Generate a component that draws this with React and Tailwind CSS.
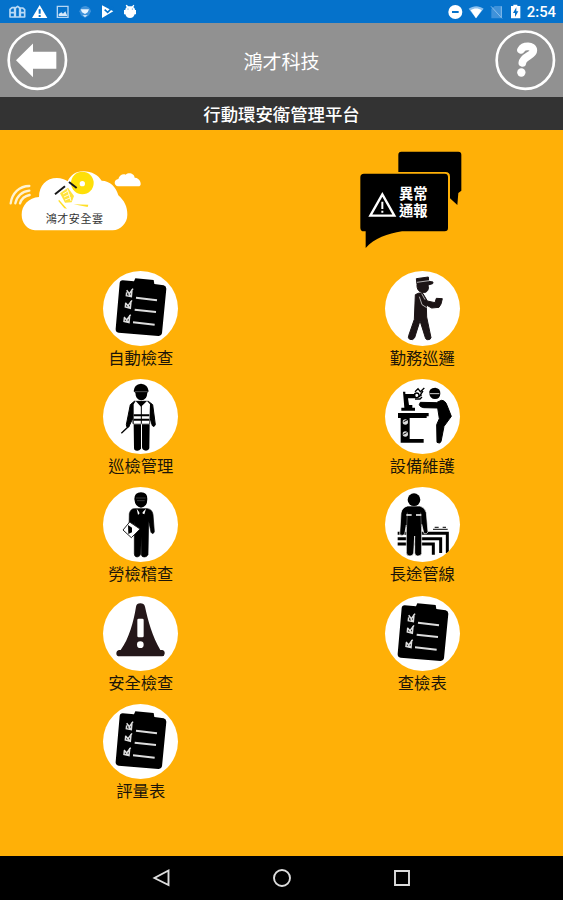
import React from "react";

const SANS = "font-['Noto_Sans_CJK_TC','Noto_Sans',sans-serif]";

function StatusBar() {
  return (
    <div className="flex h-[23px] items-center justify-between bg-[#0572cb] pr-[7px]">
      <svg width="140" height="23" viewBox="0 0 420 69" fill="#e9f3fc">
        <g fill="none" stroke="#b9d9f5" strokeWidth="5" strokeLinejoin="round">
          <path d="M30 51V28l6-5h8v28zM46 51V24l7-5 6 5v27zM61 51V24h7l6 5v22zM30 38h13M61 38h12" />
        </g>
        <path fill="#fff" fillRule="evenodd" d="M119 15l23 39H96zM116 28v13h6V28zM116 45v6h6v-6z" />
        <path fill="none" stroke="#b5d6f4" strokeWidth="4" d="M172 19h32v33h-32z" />
        <path fill="#d4e8fa" d="M176 48v-6l8-5 5 4 7-7 6 14z" />
        <path fill="#3f92da" d="M238 34c3-9 8-16 17-16s16 7 18 16l-6 12-12 8-12-8z" />
        <path fill="#eaf5ff" d="M242 28h25l-4 9-8 5-9-5zM248 46h15l-8 5z" />
        <path fill="#fff" d="M306 16l34 18-34 20z" />
        <path fill="none" stroke="#0572cb" strokeWidth="5" d="M314 29l9 8 16-16" />
        <path fill="#fff" d="M380 14l5 5h11l5-5 2 2-3 6c4 2 5 5 5 8h3v13h-4c-2 7-6 11-14 11s-12-4-14-11h-4V30h4c0-3 1-6 4-8l-3-6z" />
        <circle cx="384" cy="27" r="1.5" fill="#0572cb" />
        <circle cx="397" cy="27" r="1.5" fill="#0572cb" />
      </svg>
      <div className="flex items-center gap-[5px]">
        <svg width="75" height="23" viewBox="498 0 225 69">
          <circle cx="523" cy="36" r="21" fill="#fff" />
          <path fill="#0572cb" d="M513 33h20v6h-20z" />
          <path fill="#8ec1ee" d="M563 26c14-10 31-10 45 0l-23 29z" />
          <path fill="#fff" d="M569 31c10-7 23-7 33 0l-17 24z" />
          <path fill="#3f92da" d="M631 27l10-9h21v37h-31z" />
          <path fill="none" stroke="#87bdec" strokeWidth="3" d="M630 19l33 36M661 19v33" />
          <path fill="#fff" fillRule="evenodd" d="M697 14h12v4h9v37h-28V18h7zM706 22l-10 17h6v12l10-17h-6z" />
        </svg>
        <span className="mt-0.5 font-['Roboto',sans-serif] text-[14.8px] font-medium leading-none text-white">2:54</span>
      </div>
    </div>
  );
}

function Header() {
  return (
    <header className="flex h-[74px] items-center justify-between bg-[#919191] px-[7px]">
      <svg width="61" height="61" viewBox="21 89.5 183 183">
        <circle cx="112" cy="180" r="86" fill="none" stroke="#fff" strokeWidth="8" />
        <path fill="#fff" d="M48 180l51-50v25h70v51H99v25z" />
      </svg>
      <h1 className="text-[19px] leading-none text-white">鴻才科技</h1>
      <svg width="61" height="61" viewBox="643 89.5 183 183">
        <circle cx="734" cy="180" r="86" fill="none" stroke="#fff" strokeWidth="8" />
        <path
          fill="none"
          stroke="#fff"
          strokeWidth="23"
          strokeLinecap="round"
          strokeLinejoin="round"
          d="M721 149c8-14 37-14 37 2 0 16-30 16-33 37"
        />
        <circle cx="722" cy="217" r="12.5" fill="#fff" />
      </svg>
    </header>
  );
}

function CloudLogo() {
  return (
    <svg width="160" height="110" viewBox="0 0 480 330">
      <path
        fill="#fff"
        d="M105 271c-24-3-40-22-40-47 0-28 21-51 52-53 0-34 22-57 54-57 13 0 24 4 32 10 8-18 24-30 46-30 28 0 45 12 56 28 25 0 44 20 50 44 18 16 27 34 27 58 0 26-20 45-44 47z"
      />
      <path fill="#fff" d="M353 139c-12-3-12-20 2-22 3-12 14-17 22-13 9-9 26-4 27 9 15-1 24 21 14 26z" />
      <g fill="none" stroke="#fff3d2" strokeWidth="7" strokeLinecap="round">
        <path d="M32 190c4-30 26-52 56-52M46 190c4-21 20-36 42-38M60 190c4-13 14-22 29-25" />
      </g>
      <circle cx="247" cy="129" r="34" fill="#ffdf08" />
      <circle cx="247" cy="131" r="8" fill="#fff" />
      <path fill="none" stroke="#171717" strokeWidth="6" d="M165 163l30-24M207 126l23 18" />
      <path fill="#ffe33d" d="M180 160l24-17 18 25-7 19-20 1z" />
      <path fill="none" stroke="#fffbe0" strokeWidth="3" d="M189 162l15-9M192 171l17-8M195 180l18-7M202 148l11 35" />
      <path fill="#ffdf26" d="M177 179l24 27-8-1-18-22zM221 193l44 1-2 7z" />
      <text x="223" y="249" textAnchor="middle" fontSize="33" textLength="172" fill="#333" fontFamily="Noto Sans CJK TC, sans-serif">
        鴻才安全雲
      </text>
    </svg>
  );
}

function ReportLogo() {
  return (
    <div className="relative">
      <svg width="140" height="115" viewBox="0 0 420 345">
        <path d="M184 35h171q9 0 9 9v108l-9 7-3 36-22-20v-65q0-14-14-14H175V44q0-9 9-9z" />
        <path d="M72 101h242q10 0 10 10v153q0 10-10 10H186c-43 7-83 21-109 50v-50h-5q-11 0-11-11V112q0-11 11-11z" />
        <path fill="none" stroke="#fff" strokeWidth="7" d="M127 163l36 64H91z" />
        <path stroke="#fff" strokeWidth="6" d="M127 185v22M127 212v6" />
      </svg>
      <p className="absolute left-[59px] top-[44px] w-[29px] break-all text-[14.3px] font-bold leading-[17px] text-white">
        異常通報
      </p>
    </div>
  );
}

function Clipboard() {
  return (
    <g>
      <path d="M85 44l34 3 4-9 55 5 2 12 28 4q8 2 8 10l-13 134q-2 9-11 8l-119-10q-10-2-9-12L76 52q1-8 9-8z" />
      <path stroke="#ddd" strokeWidth="6" d="M125 96l63 8M121 132l64 7M116 170l65 7" />
      <g fill="none" stroke="#ddd" strokeWidth="4.5">
        <path d="M97 74l8 10 11-15M113 72l-2 21-15-3 1-10M103 84l8 9" />
        <path d="M93 111l8 9 12-16M110 107l-2 21-15-4 1-10M99 119l9 9" />
        <path d="M89 154l8 9 12-16M106 150l-2 21-15-4 1-10M95 162l9 9" />
      </g>
    </g>
  );
}

function Patrol() {
  return (
    <g fill="#1c1415" stroke="#1c1415" strokeWidth="3" strokeLinejoin="round">
      <path d="M123 39l36-5 1 13 13 2-1 5-14 4c4 13-2 23-14 23-12 0-20-9-19-25z" />
      <path stroke="#fff" strokeWidth="2" d="M125 50l36-5" />
      <path d="M120 87q10-8 23-3l13 22 23 5 4-13 18 1-4 16-6 10-22 2-16-9 1 36 13 62q-2 8-11 6-5-1-6-6l-16-51-16 51q-5 9-15 5-6-4-3-11l17-49z" />
      <path fill="none" stroke="#fff" strokeWidth="2" d="M132 93l8 24 14 9M139 84l10 18" />
    </g>
  );
}

function Inspector() {
  return (
    <g>
      <path d="M118 53q1-21 22-23 21 2 23 23l-4 4q-1 22-18 23-17-1-18-23z" />
      <path stroke="#777" strokeWidth="2" d="M121 54h39" />
      <path d="M120 83h42l13 10 8 60q-3 9-9 3l-8-27v21h-50v-17l-13 27q-8 2-7-7l12-60z" stroke="#000" strokeWidth="3" />
      <path fill="#fff" d="M124 82l16 17 18-17 9 10-2 58h-47V92z" />
      <path stroke="#000" strokeWidth="6" d="M118 125h47M118 138h47" />
      <path stroke="#000" strokeWidth="3" d="M141 95v55" />
      <path d="M118 152h22v73q-6 7-12 6-9 0-9-8zM143 152h23l-1 72q-2 7-10 7-12-1-12-10z" />
      <path fill="none" stroke="#000" strokeWidth="4" d="M104 157l-23 22" />
    </g>
  );
}

function Maintenance() {
  return (
    <g>
      <path d="M83 54h7v7h30v13H98l3 20h10v8h8v9H78v-9h9zM68 118h92v10h-6v5H68zM76 132h27v64h42v11H76z" />
      <g fill="#ddd"><circle cx="90" cy="145" r="8" /><circle cx="90" cy="181" r="8" /></g>
      <path fill="none" stroke="#000" strokeWidth="3" d="M85 144l10-5M84 182l10-5" />
      <g fill="none" stroke="#000" strokeWidth="4">
        <circle cx="124" cy="65" r="7" />
        <path d="M119 54l9-9 7 9 12-11M130 70l9-7M143 52l-11 16M119 76h15l6-6" />
      </g>
      <path d="M162 60q-3-17 18-18 16 2 15 18-1 16-16 16-15-1-17-16z" />
      <path stroke="#fff" strokeWidth="2.5" d="M163 60h29" />
      <path
        stroke="#000"
        strokeWidth="3"
        strokeLinejoin="round"
        d="M135 86l48 1 15-7q12 0 17 15l13 33-22 30-9 46q-4 7-12 2l-1-53 8-18-5-32-42-1q-12-2-13-9z"
      />
    </g>
  );
}

function Auditor() {
  return (
    <g>
      <path d="M120 52q0-19 20-20 20 1 19 20 0 24-19 26-18-2-20-26z" />
      <path stroke="#555" strokeWidth="2" d="M125 49h29M128 57h23" />
      <path
        stroke="#000"
        strokeWidth="2"
        d="M120 81h39q15 2 17 18l4 51q-4 10-10 2l-7-34-2 101q-4 8-12 7-8 0-8-9v-54l-2 55q-3 8-11 8-8-1-8-9v-99l-3 32h-13l1-54q4-15 15-15z"
      />
      <path fill="#fff" d="M127 81l12 17 16-17-5 17-10-4-9 5z" />
      <path d="M137 83h6l2 14-5 6-5-6z" />
      <path fill="#fff" stroke="#222" strokeWidth="3" d="M86 145l20-24 31 21-26 26z" />
      <path d="M101 130l12 8v14l-11 5z" />
    </g>
  );
}

function Pipeline() {
  return (
    <g>
      <path fill="none" stroke="#000" strokeWidth="9" d="M67 155h149v59M67 171h129v43M67 187h107v32" />
      <path fill="none" stroke="#333" strokeWidth="4" d="M173 143h44M178 137h12M202 137h10" />
      <path stroke="#fff" strokeWidth="2" fill="#000" d="M97 73h37q15 4 19 20l5 58q-4 8-12 5l-7-28v88q-4 8-12 7-8 0-9-9v-51l-3 51q-2 9-11 9-11 0-11-10v-83l-5 28q-7 6-15 1l4-65q3-17 20-21z" />
      <circle cx="116" cy="54" r="19" />
      <path stroke="#777" strokeWidth="2" d="M96 93l-2 43M136 93l2 43" />
      <path fill="#fff" d="M93 98h16v4H93zM122 98h16v4h-16z" />
    </g>
  );
}

function Cone() {
  return (
    <g fill="#241719">
      <path d="M125 48q2-10 13-10t14 10c9 42 22 89 46 130h6q8 2 7 11-1 8-8 8H75q-8 0-9-8 0-9 8-11h5c25-34 39-85 46-130z" />
      <rect x="129" y="84" width="19" height="56" rx="4" fill="#fff" />
      <circle cx="138" cy="162" r="10" fill="#fff" />
    </g>
  );
}

const items = [
  { label: "自動檢查", Icon: Clipboard },
  { label: "勤務巡邏", Icon: Patrol, right: true },
  { label: "巡檢管理", Icon: Inspector },
  { label: "設備維護", Icon: Maintenance, right: true },
  { label: "勞檢稽查", Icon: Auditor },
  { label: "長途管線", Icon: Pipeline, right: true },
  { label: "安全檢查", Icon: Cone },
  { label: "查檢表", Icon: Clipboard },
  { label: "評量表", Icon: Clipboard },
];

function MenuItem({ label, Icon, right }) {
  return (
    <div className="flex flex-col items-center">
      <div className="size-[75px] overflow-hidden rounded-full bg-white">
        <svg width="75" height="75" viewBox={right ? "29 16 225 225" : "26 16 225 225"}>
          <Icon />
        </svg>
      </div>
      <span className="text-[16.3px] leading-[23px] text-[#1c1508]">{label}</span>
    </div>
  );
}

function NavBar() {
  return (
    <nav className="flex h-11 items-center justify-center bg-black">
      <div className="flex w-[261px] items-center justify-between">
        <svg width="20" height="20" viewBox="0 0 20 20" fill="none" stroke="#ddd" strokeWidth="1.9">
          <path d="M17.5 2.5v14.5L3.5 10z" />
        </svg>
        <svg width="20" height="20" viewBox="0 0 20 20" fill="none" stroke="#ddd" strokeWidth="1.9">
          <circle cx="10" cy="10" r="8" />
        </svg>
        <svg width="20" height="20" viewBox="0 0 20 20" fill="none" stroke="#ddd" strokeWidth="1.9">
          <path d="M3 3h14v14H3z" />
        </svg>
      </div>
    </nav>
  );
}

export default function App() {
  return (
    <div className={`flex h-[900px] w-[563px] flex-col overflow-hidden bg-[#ffb007] ${SANS}`}>
      <StatusBar />
      <Header />
      <div className="flex h-[33px] items-center justify-center bg-[#333333]">
        <h2 className="text-[17.4px] font-medium leading-none text-white">行動環安衛管理平台</h2>
      </div>
      <main className="flex flex-1 flex-col">
        <div className="flex h-[140.8px] items-start gap-[180px] pt-[10px]">
          <CloudLogo />
          <ReportLogo />
        </div>
        <div className="grid auto-rows-[108.3px] grid-cols-2">
          {items.map((item) => (
            <MenuItem key={item.label} {...item} />
          ))}
        </div>
      </main>
      <NavBar />
    </div>
  );
}
